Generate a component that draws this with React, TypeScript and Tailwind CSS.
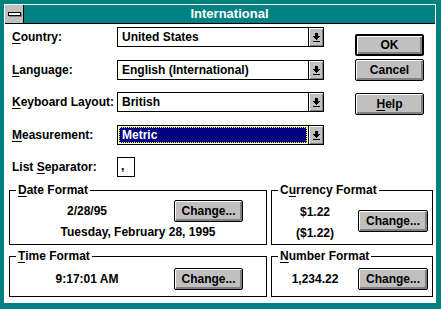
import React from 'react';

function Ul({ children }: { children: React.ReactNode }) {
  return <span className="underline underline-offset-[2px] decoration-1">{children}</span>;
}

function Arrow() {
  return (
    <svg width="7" height="9" viewBox="0 0 7 9" shapeRendering="crispEdges" fill="#000">
      <rect x="2" y="0" width="3" height="3" />
      <rect x="0" y="3" width="7" height="1" />
      <rect x="1" y="4" width="5" height="1" />
      <rect x="2" y="5" width="3" height="1" />
      <rect x="3" y="6" width="1" height="1" />
      <rect x="0" y="8" width="7" height="1" />
    </svg>
  );
}

function Combo({ value, selected }: { value: string; selected?: boolean }) {
  return (
    <div className="flex h-[20px] w-[207px] border border-black bg-white">
      {selected ? (
        <div className="flex-1 m-[1px] flex items-center pl-[3px] bg-[#000080] text-white outline-1 outline-dotted outline-[#ffff00] -outline-offset-1">
          {value}
        </div>
      ) : (
        <div className="flex-1 flex items-center pl-[4px]">{value}</div>
      )}
      <div className="w-[15px] border-l border-black bg-[#c0c0c0] shadow-[inset_1px_1px_0_#fff,inset_-1px_-1px_0_#808080] flex items-center justify-center">
        <Arrow />
      </div>
    </div>
  );
}

function Btn({ children, primary }: { children: React.ReactNode; primary?: boolean }) {
  return (
    <button
      className={
        primary
          ? 'h-[22px] w-[69px] rounded-[2px] border-2 border-black bg-[#c0c0c0] shadow-[inset_1px_1px_0_#fff,inset_-2px_-2px_0_#808080] font-bold'
          : 'h-[22px] w-[69px] rounded-[2px] border border-black bg-[#c0c0c0] shadow-[inset_1px_1px_0_#fff,inset_-2px_-2px_0_#808080] font-bold'
      }
    >
      {children}
    </button>
  );
}

function Row({ label, children }: { label: React.ReactNode; children: React.ReactNode }) {
  return (
    <div className="flex items-center h-[20px]">
      <div className="w-[105px]">{label}</div>
      {children}
    </div>
  );
}

export default function App() {
  return (
    <div className="w-[441px] h-[309px] overflow-hidden bg-[#008080] pl-[4px] pt-[4px] font-['Liberation_Sans',Arial,sans-serif] text-[12px] leading-[14px] font-bold text-black">
      <div className="w-[432px] h-[299px] border border-white bg-white flex flex-col">
        {/* title bar */}
        <div className="flex h-[19px] border-b border-black">
          <div className="w-[19px] border-r border-black bg-[#c0c0c0] flex items-center justify-center">
            <div className="w-[13px] h-[4px] border border-black bg-white shadow-[1px_1px_0_#808080]" />
          </div>
          <div className="flex-1 bg-[#008080] flex items-center justify-center text-white text-[13px]">
            International
          </div>
        </div>

        {/* client */}
        <div className="flex-1 flex flex-col">
          <div className="flex pl-[7px]">
            <div className="w-[312px] flex flex-col pt-[3px]">
              <Row label={<><Ul>C</Ul>ountry:</>}>
                <Combo value="United States" />
              </Row>
              <div className="mt-[13px]">
                <Row label={<><Ul>L</Ul>anguage:</>}>
                  <Combo value="English (International)" />
                </Row>
              </div>
              <div className="mt-[12px]">
                <Row label={<><Ul>K</Ul>eyboard Layout:</>}>
                  <Combo value="British" />
                </Row>
              </div>
              <div className="mt-[13px]">
                <Row label={<><Ul>M</Ul>easurement:</>}>
                  <Combo value="Metric" selected />
                </Row>
              </div>
              <div className="mt-[12px]">
                <Row label={<>List <Ul>S</Ul>eparator:</>}>
                  <div className="w-[18px] h-[20px] border border-black flex items-end pl-[3px] pb-[3px]">,</div>
                </Row>
              </div>
            </div>
            <div className="ml-[31px] w-[69px] flex flex-col pt-[10px]">
              <Btn primary>OK</Btn>
              <div className="mt-[3px]">
                <Btn>Cancel</Btn>
              </div>
              <div className="mt-[12px]">
                <Btn>
                  <Ul>H</Ul>elp
                </Btn>
              </div>
            </div>
          </div>

          {/* format groups */}
          <div className="mt-[6px] pl-[4px] grid grid-cols-[258px_162px] gap-x-[4px] gap-y-[4px]">
            <fieldset className="border border-black">
              <legend className="ml-[6px] px-[2px]">
                <Ul>D</Ul>ate Format
              </legend>
              <div className="flex items-center pt-[3px]">
                <span className="w-[154px] text-center">2/28/95</span>
                <div className="ml-[10px]">
                  <Btn>Change...</Btn>
                </div>
              </div>
              <div className="mt-[3px] pb-[5px] text-center">Tuesday, February 28, 1995</div>
            </fieldset>

            <fieldset className="border border-black">
              <legend className="ml-[6px] px-[2px]">
                C<Ul>u</Ul>rrency Format
              </legend>
              <div className="flex items-center">
                <div className="w-[86px] flex flex-col items-center pt-[8px] pb-[4px] gap-[7px]">
                  <span>$1.22</span>
                  <span>($1.22)</span>
                </div>
                <button className="h-[22px] w-[70px] rounded-[2px] border border-black bg-[#c0c0c0] shadow-[inset_1px_1px_0_#fff,inset_-2px_-2px_0_#808080] font-bold">
                  Change...
                </button>
              </div>
            </fieldset>

            <fieldset className="border border-black">
              <legend className="ml-[6px] px-[2px]">
                <Ul>T</Ul>ime Format
              </legend>
              <div className="flex items-center pt-[5px] pb-[6px]">
                <span className="w-[154px] text-center">9:17:01 AM</span>
                <div className="ml-[10px]">
                  <Btn>Change...</Btn>
                </div>
              </div>
            </fieldset>

            <fieldset className="border border-black">
              <legend className="ml-[6px] px-[2px]">
                <Ul>N</Ul>umber Format
              </legend>
              <div className="flex items-center pt-[5px] pb-[6px]">
                <span className="w-[86px] text-center">1,234.22</span>
                <button className="h-[22px] w-[70px] rounded-[2px] border border-black bg-[#c0c0c0] shadow-[inset_1px_1px_0_#fff,inset_-2px_-2px_0_#808080] font-bold">
                  Change...
                </button>
              </div>
            </fieldset>
          </div>
        </div>
      </div>
    </div>
  );
}
